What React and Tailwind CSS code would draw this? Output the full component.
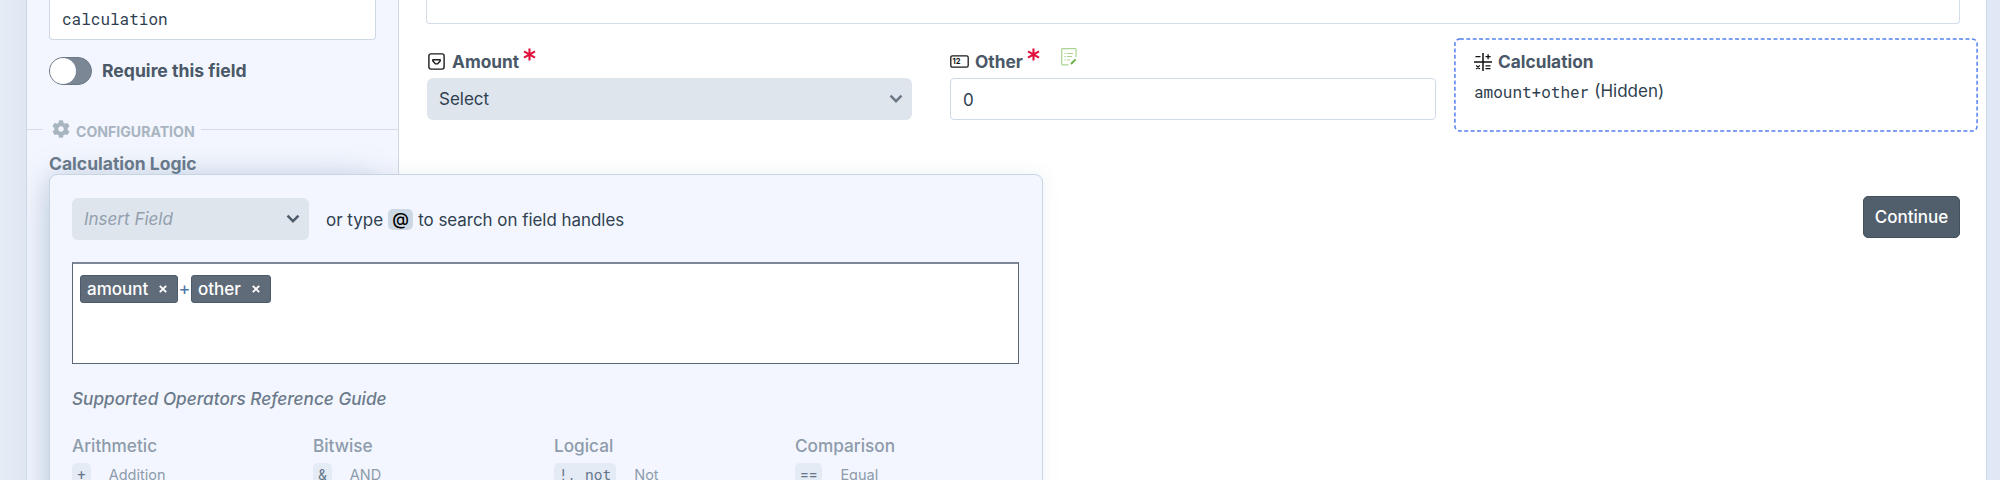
const SANS = "font-['Inter',sans-serif]";
const MONO = "font-['Roboto_Mono','DejaVu_Sans_Mono',monospace]";

function Chevron({ className }) {
  return (
    <svg className={className} width="14" height="10" viewBox="0 0 14 10" fill="none" stroke="currentColor" strokeWidth="2.4">
      <path d="M1.5 1.7 7 7.2 12.5 1.7" />
    </svg>
  );
}

function Asterisk() {
  return (
    <svg className="ml-[4px]" width="13" height="13" viewBox="0 0 13 13" stroke="#e0103a" strokeWidth="2.1">
      <path d="M6.5 0.4V12.6M1 3.3 12 9.7M12 3.3 1 9.7" />
    </svg>
  );
}

function DropdownIcon() {
  return (
    <svg width="17" height="17" viewBox="0 0 17 17" fill="none" stroke="#1a1a1a" strokeWidth="1.4">
      <rect x="0.9" y="0.9" width="15.2" height="15.2" rx="2" />
      <path d="M4.8 6.7h7.4v1.200L9.400 10.900H7.600L4.800 7.900z" strokeLinejoin="round" />
    </svg>
  );
}

function NumberIcon() {
  return (
    <svg width="19" height="13" viewBox="0 0 19 13">
      <rect x="0.8" y="0.8" width="17.4" height="11.4" rx="1.6" fill="none" stroke="#1a1a1a" strokeWidth="1.3" />
      <text x="2.6" y="9.2" fontSize="7.5" fontWeight="700" fill="#111" fontFamily="Inter, sans-serif">12</text>
    </svg>
  );
}

function NoteIcon() {
  return (
    <svg width="16" height="18" viewBox="0 0 16 18" fill="none" stroke="#a9d392" strokeWidth="1.2">
      <path d="M7.5 16.8H1.6a.9.9 0 0 1-.9-.9V1.6a.9.9 0 0 1 .9-.9h12.6a.9.9 0 0 1 .9.9V9" />
      <path d="M3.3 5.500h1.4M3.3 8.5h1.4M3.3 12h1.4M6 5.500h6M6 8.5h5M6 12h3" />
      <path d="M10 16l4.6-4.6" stroke="#6ab04c" strokeWidth="2" />
    </svg>
  );
}

function CalcIcon() {
  return (
    <svg width="18" height="18" viewBox="0 0 18 18" stroke="#111">
      <path d="M9 0v18M0 9h18" strokeWidth="1.5" />
      <path d="M1.5 3.700h5M11.5 3.700h5.200M14.100 1.200v5M2.200 12.400l3.600 3.600M5.800 12.400l-3.600 3.600M11.500 12.800h5M11.5 15.600h5" strokeWidth="1.3" />
    </svg>
  );
}

function Gear() {
  return (
    <svg width="18" height="18" viewBox="0 0 512 512" fill="#a9b4c1">
      <path d="M487.4 315.7l-42.6-24.6c4.3-23.2 4.3-47 0-70.2l42.6-24.6c4.9-2.8 7.1-8.6 5.5-14-11.1-35.6-30-67.8-54.7-94.6-3.8-4.1-10-5.1-14.8-2.3L380.8 110c-17.9-15.4-38.5-27.3-60.8-35.1V25.8c0-5.6-3.9-10.5-9.4-11.7-36.7-8.2-74.3-7.8-109.2 0-5.5 1.2-9.4 6.1-9.4 11.7V75c-22.2 7.9-42.8 19.8-60.8 35.1L88.7 85.5c-4.9-2.8-11-1.9-14.8 2.3-24.7 26.7-43.6 58.9-54.7 94.6-1.7 5.4.6 11.2 5.5 14L67.3 221c-4.3 23.2-4.3 47 0 70.2l-42.6 24.6c-4.9 2.8-7.1 8.6-5.5 14 11.1 35.6 30 67.8 54.7 94.6 3.8 4.1 10 5.1 14.8 2.3l42.6-24.6c17.9 15.4 38.5 27.3 60.8 35.1v49.2c0 5.6 3.9 10.5 9.4 11.7 36.7 8.2 74.3 7.8 109.2 0 5.5-1.2 9.4-6.1 9.4-11.7v-49.2c22.2-7.9 42.8-19.8 60.8-35.1l42.6 24.6c4.9 2.8 11 1.9 14.8-2.3 24.7-26.7 43.6-58.9 54.7-94.6 1.5-5.5-.7-11.3-5.6-14.1zM256 336c-44.1 0-80-35.9-80-80s35.9-80 80-80 80 35.9 80 80-35.9 80-80 80z" />
    </svg>
  );
}

function Token({ label, className }) {
  return (
    <span className={`flex h-[28px] items-center rounded-[3px] border border-[#4c5a6b] bg-[#606b7a] pl-[6px] text-white ${className}`}>
      <span className="font-medium">{label}</span>
      <svg className="ml-[11px]" width="8" height="8" viewBox="0 0 8 8" stroke="white" strokeWidth="1.9">
        <path d="M.8.8l6.4 6.4M7.2.8.8 7.2" />
      </svg>
    </span>
  );
}

const groups = [
  { title: "Arithmetic", code: "+", name: "Addition" },
  { title: "Bitwise", code: "&", name: "AND" },
  { title: "Logical", code: "!, not", name: "Not" },
  { title: "Comparison", code: "==", name: "Equal" },
];

function LogicPopover() {
  return (
    <div className="absolute top-[174px] left-[49px] h-[400px] w-[994px] rounded-[8px] border border-[#c6d4e3] bg-[#f3f6fe] px-[22px] pt-[23px] shadow-[0_0_18px_rgba(90,120,155,0.10)]">
      <div className="flex items-center">
        <div className="flex h-[42px] w-[237px] items-center justify-between rounded-[6px] bg-[#dee5ed] pr-[9px] pl-[12px] text-[#929fae]">
          <span className="italic">Insert Field</span>
          <Chevron className="text-[#4c5a69]" />
        </div>
        <span className="ml-[17px] pt-px">or type</span>
        <span className="ml-[5px] flex h-[21px] w-[25px] items-center justify-center rounded-[5px] bg-[#cdd8e5] font-medium text-black">@</span>
        <span className="ml-[5px] pt-px text-[16.9px]">to search on field handles</span>
      </div>
      <div className="mt-[22px] flex h-[102px] w-[947px] items-start border border-t-2 border-[#5b6776] border-t-[#7c8797] bg-white pt-[11px] pl-[7px]">
        <Token label="amount" className="w-[98px]" />
        <span className="w-[13px] text-center text-[18px] leading-[28px] text-[#4a78a8]">+</span>
        <Token label="other" className="w-[80px]" />
      </div>
      <div className="mt-[23px] text-[17.2px] font-medium text-[#6b7a8a] italic">Supported Operators Reference Guide</div>
      <div className="mt-[23px] grid w-[964px] grid-cols-4 text-[#8d9bab]">
        {groups.map((g) => (
          <div key={g.title}>
            <div className="text-[17.2px] font-medium">{g.title}</div>
            <div className="mt-[5px] flex h-[24px] items-center">
              <span className={`flex h-[24px] items-center rounded-[5px] bg-[#e4ebf5] px-[5px] text-[14.5px] whitespace-pre text-[#66768a] ${MONO}`}>{g.code}</span>
              <span className="ml-[18px] text-[14.5px]">{g.name}</span>
            </div>
          </div>
        ))}
      </div>
    </div>
  );
}

export default function App() {
  return (
    <div className={`relative flex h-[480px] w-[2000px] overflow-hidden bg-[#e1e8f5] text-[17px] leading-6 text-[#2f3f50] ${SANS}`}>
      <div className="w-[26px] shrink-0 bg-linear-to-r from-[#e5ecf6] to-[#dfe7f2]" />
      <aside className="w-[373px] shrink-0 border-x border-[#cdd8e4] bg-[#f3f6fe]">
        <div className={`ml-[22px] flex h-[40px] w-[327px] items-center rounded-b-[4px] border border-t-0 border-[#cdd7e5] bg-white pb-[2px] pl-[12px] text-[16px] ${MONO}`}>
          calculation
        </div>
        <div className="mt-[17px] ml-[22px] flex items-center">
          <div className="h-[28px] w-[43px] rounded-full border border-[#6c7886] bg-[#7b8794]">
            <div className="size-[26px] rounded-full bg-white" />
          </div>
          <span className="ml-[10px] text-[17.6px] font-bold text-[#4a5868]">Require this field</span>
        </div>
        <div className="mt-[32px] flex h-[24px] items-center">
          <div className="h-px w-[16px] bg-[#d3dce8]" />
          <div className="ml-[9px]"><Gear /></div>
          <span className="mt-[5px] ml-[6px] text-[14.1px] font-bold text-[#a9b4c1]">CONFIGURATION</span>
          <div className="ml-[6px] h-px flex-1 bg-[#d3dce8]" />
        </div>
        <div className="mt-[11px] ml-[22px] text-[17.5px] font-bold text-[#6b7a8a]">Calculation Logic</div>
      </aside>
      <main className="h-full w-[1588px] shrink-0 border-r border-[#cdd8e8] bg-white pl-[27px]">
        <div className="h-[24px] w-[1534px] rounded-b-[4px] border border-t-0 border-[#d3dce8]" />
        <div className="flex">
          <div className="ml-px w-[485px] pt-[24px]">
            <div className="flex h-[27px]">
              <div className="mt-[5px] ml-px"><DropdownIcon /></div>
              <span className="mt-[2px] ml-[7px] text-[17.3px] font-bold text-[#4a5868]">Amount</span>
              <Asterisk />
            </div>
            <div className="mt-[3px] flex h-[42px] items-center justify-between rounded-[6px] bg-[#dee5ed] pr-[9px] pl-[12px]">
              Select
              <Chevron className="text-[#6b7785]" />
            </div>
          </div>
          <div className="ml-[38px] w-[486px] pt-[24px]">
            <div className="flex h-[27px]">
              <div className="mt-[7px]"><NumberIcon /></div>
              <span className="mt-[2px] ml-[6px] text-[17.3px] font-bold text-[#4a5868]">Other</span>
              <Asterisk />
              <div className="ml-[21px]"><NoteIcon /></div>
            </div>
            <div className="mt-[3px] flex h-[42px] items-center rounded-[4px] border border-[#d0daea] pt-px pl-[12px]">0</div>
          </div>
          <div className="relative mt-[14px] ml-[18px] h-[94px] w-[524px] shrink-0 pt-[12px] pl-[20px]">
            <svg className="absolute inset-0" width="524" height="94" fill="none">
              <rect x="0.9" y="0.9" width="522.2" height="92.2" rx="5" stroke="#5580f0" strokeWidth="1.5" strokeDasharray="4 2.4" />
            </svg>
            <div className="flex items-center">
              <CalcIcon />
              <span className="ml-[6px] text-[17.3px] font-bold text-[#4a5868]">Calculation</span>
            </div>
            <div className="mt-[5px] flex">
              <span className={`pt-px text-[16px] ${MONO}`}>amount+other</span>
              <span className="ml-[5px]">(Hidden)</span>
            </div>
          </div>
        </div>
        <div className="mt-[64px] flex w-[1534px] justify-end">
          <button className="h-[42px] w-[97px] rounded-[5px] border border-[#43505e] bg-[#515f6c] font-medium text-white">Continue</button>
        </div>
      </main>
      <div className="absolute top-0 left-[27px] h-[480px] w-[371px] overflow-hidden">
        <div className="absolute top-[182px] left-[22px] h-[400px] w-[325px] rounded-[8px] shadow-[0_0_38px_rgba(80,120,155,0.32)]" />
      </div>
      <LogicPopover />
    </div>
  );
}
